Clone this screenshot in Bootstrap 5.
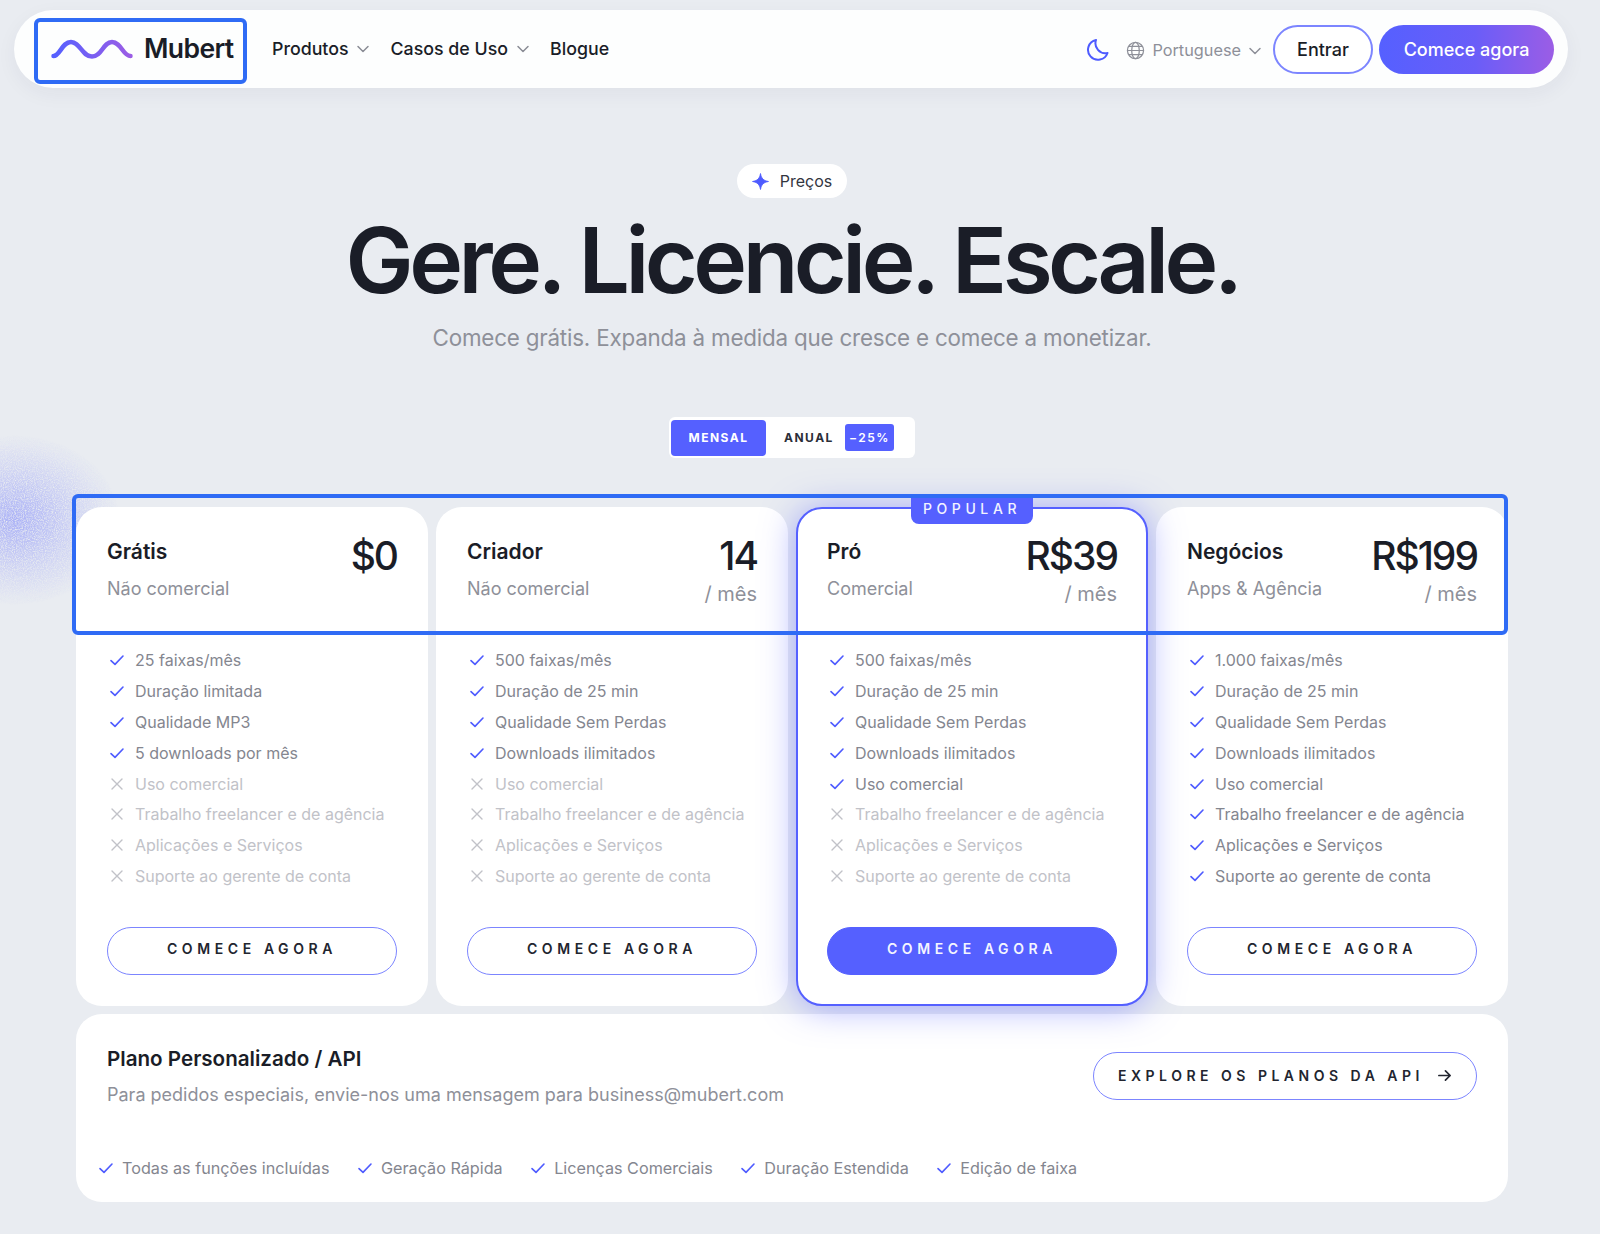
<!DOCTYPE html>
<html lang="pt">

<head>
  <meta charset="UTF-8" />
  <meta name="viewport" content="width=device-width, initial-scale=1.0" />
  <title>Preços - Mubert</title>
  <link href="https://cdn.jsdelivr.net/npm/bootstrap@5.3.0/dist/css/bootstrap.min.css" rel="stylesheet" />
  <style>
    body {
      background: #e9ecf1;
      font-family: "Inter", "Liberation Sans", sans-serif;
      color: #1a1d27;
      overflow-x: hidden;
    }

    .page-shell {
      width: 1584px;
      position: relative;
      height: 1234px;
      overflow: hidden;
    }

    .blur-spot {
      position: absolute;
      left: -90px;
      top: 435px;
      width: 210px;
      height: 170px;
    }

    .top-bar {
      margin: 10px 16px 0 14px;
      height: 78px;
      background: #fdfefe;
      border-radius: 39px;
      padding: 0 14px 0 20px;
      box-shadow: 0 6px 20px rgba(30, 40, 70, .05);
    }

    .logo-wrap {
      width: 213px;
      height: 66px;
      padding-left: 17px;
      gap: 11px;
      margin-right: 25px;
      font-size: 26.5px;
      font-weight: 600;
      letter-spacing: -.6px;
      color: #1a1d27;
      text-decoration: none;
    }

    .mark-box {
      position: absolute;
      border: 4px solid #2f6bf5;
      border-radius: 6px;
      pointer-events: none;
      z-index: 5;
    }

    .mark-logo {
      left: 0;
      top: 2px;
      width: 213px;
      height: 66px;
    }

    .mark-heads {
      left: 72px;
      top: 494px;
      width: 1436px;
      height: 141px;
    }

    .menu-link {
      font-size: 17.8px;
      font-weight: 500;
      color: #1a1d27;
      text-decoration: none;
      margin-right: 20.5px;
      gap: 7.5px;
    }

    .menu-link svg {
      color: #8a8c95;
    }

    .lang-pick {
      font-size: 16.3px;
      color: #8e9099;
      gap: 7px;
      margin: 0 11px 0 16px;
      padding-top: 3px;
    }

    .btn-enter {
      width: 100px;
      height: 49px;
      border: 2px solid #7c85ff;
      border-radius: 25px;
      background: #fff;
      color: #1a1d27;
      font-size: 18px;
      font-weight: 450;
      padding: 0;
    }

    .btn-start {
      width: 175px;
      height: 49px;
      margin-left: 6px;
      border: 0;
      border-radius: 25px;
      background: linear-gradient(90deg, #5560ff 0%, #6a5df8 55%, #9b5de5 100%);
      color: #fff;
      font-size: 18px;
      font-weight: 450;
      padding: 0;
    }

    .tag-pill {
      width: 110px;
      height: 34px;
      margin-top: 76px;
      gap: 11px;
      background: #fff;
      border-radius: 17px;
      font-size: 16px;
      color: #33363f;
    }

    .hero-title {
      font-size: 91px;
      font-weight: 600;
      letter-spacing: -4.5px;
      line-height: 110px;
      margin: 7px 0 0;
      color: #1a1d27;
    }

    .hero-sub {
      font-size: 22.4px;
      color: #8e9099;
      line-height: 32px;
      margin: 7px 0 0;
      letter-spacing: -.2px;
    }

    .billing-switch {
      width: 246px;
      height: 41px;
      margin-top: 63px;
      padding: 2px;
      background: #fff;
      border-radius: 6px;
      font-size: 12px;
      font-weight: 700;
      letter-spacing: 1.5px;
    }

    .billing-on {
      width: 95px;
      height: 36px;
      background: #5560ff;
      color: #fff;
      border-radius: 4px;
    }

    .billing-off {
      margin-left: 18px;
      color: #2b2e38;
    }

    .billing-off-tag {
      width: 49px;
      height: 27px;
      margin-left: 11px;
      background: #5560ff;
      color: #fff;
      border-radius: 3px;
      font-weight: 600;
    }

    .plans-area {
      width: 1432px;
      margin: 49px 0 0 76px;
    }

    .plan-box {
      height: 499px;
      background: #fff;
      border: 0;
      border-radius: 26px;
      padding: 31px 31px 0;
    }

    .plan-hot {
      z-index: 2;
      border: 2px solid #5560ff;
      padding: 29px 29px 0;
      box-shadow: 0 2px 34px rgba(85, 96, 255, .5);
    }

    .hot-tag {
      position: absolute;
      top: -11px;
      left: 113px;
      width: 122px;
      height: 26px;
      background: #5560ff;
      color: #f2f3ff;
      border-radius: 0 0 8px 8px;
      font-size: 14px;
      line-height: 22px;
      font-weight: 500;
      letter-spacing: 4.6px;
      text-align: center;
    }

    .plan-head {
      height: 96px;
      margin-bottom: 10.5px;
    }

    .plan-name {
      font-size: 21px;
      font-weight: 600;
      line-height: 28px;
      margin: 0 0 10px;
    }

    .plan-note {
      font-size: 18px;
      line-height: 26px;
      color: #8e9099;
      margin: 0;
    }

    .plan-price {
      font-size: 39px;
      font-weight: 500;
      line-height: 44px;
      letter-spacing: -2px;
      white-space: nowrap;
      margin-top: -4px;
    }

    .plan-per {
      font-size: 20px;
      line-height: 28px;
      color: #8e9099;
      margin-top: 2px;
    }

    .perk-list {
      height: 282.5px;
      margin: 0;
    }

    .perk-row {
      height: 30.9px;
      gap: 10px;
      padding-left: 2px;
      font-size: 16px;
      color: #84868f;
    }

    .perk-row svg {
      color: #4e5bff;
      flex: none;
    }

    .perk-off,
    .perk-off svg {
      color: #c1c2c8;
    }

    .plan-btn {
      height: 48px;
      border: 1.5px solid #7c85ff;
      border-radius: 24px;
      background: #fff;
      color: #22252f;
      font-size: 14px;
      font-weight: 600;
      letter-spacing: 4.6px;
      padding: 0 0 5px;
    }

    .plan-btn:hover {
      background: #fff;
    }

    .plan-btn-fill {
      background: #5560ff;
      border-color: #5560ff;
      color: #f4f5ff;
    }

    .custom-box {
      height: 188px;
      margin-top: 8px;
      background: #fff;
      border: 0;
      border-radius: 26px;
      padding: 30px 31px 0;
    }

    .custom-title {
      font-size: 20.6px;
      font-weight: 600;
      line-height: 30px;
      margin: 0 0 7px;
    }

    .custom-sub {
      font-size: 18px;
      line-height: 28px;
      color: #8e9099;
      margin: 0;
    }

    .api-btn {
      width: 384px;
      height: 48px;
      margin-top: 8px;
      gap: 13px;
      border: 1.5px solid #7c85ff;
      border-radius: 24px;
      background: #fff;
      color: #22252f;
      font-size: 14px;
      font-weight: 600;
      letter-spacing: 4.5px;
      padding: 0 0 2px;
    }

    .custom-perks {
      margin: 47px 0 0 -9px;
      gap: 27.5px;
      font-size: 16.2px;
      color: #84868f;
    }

    .custom-perks svg {
      color: #4e5bff;
    }
  </style>
</head>

<body>
  <div class="page-shell">
    <!-- grainy glow behind the first card -->
    <svg class="blur-spot" viewBox="0 0 210 170">
      <defs>
        <radialGradient id="spotFill">
          <stop offset="0" stop-color="#5560ff" stop-opacity=".42" />
          <stop offset=".5" stop-color="#5560ff" stop-opacity=".2" />
          <stop offset="1" stop-color="#5560ff" stop-opacity="0" />
        </radialGradient>
        <filter id="spotGrain" x="0" y="0" width="100%" height="100%">
          <feTurbulence type="fractalNoise" baseFrequency=".9" numOctaves="2" seed="4" result="grain" />
          <feColorMatrix in="grain" type="matrix" values="0 0 0 0 1  0 0 0 0 1  0 0 0 0 1  0 0 0 2.200 -.35" result="mask" />
          <feComposite in="SourceGraphic" in2="mask" operator="in" />
        </filter>
      </defs>
      <ellipse cx="105" cy="85" rx="105" ry="85" fill="url(#spotFill)" filter="url(#spotGrain)" />
    </svg>

    <svg class="d-none">
      <symbol id="ico-check" viewBox="0 0 16 16">
        <path d="M2 8.6 6 12.4 14 4" fill="none" stroke="currentColor" stroke-width="1.6" stroke-linecap="round" stroke-linejoin="round" />
      </symbol>
      <symbol id="ico-cross" viewBox="0 0 16 16">
        <path d="M3 3 13 13M13 3 3 13" fill="none" stroke="currentColor" stroke-width="1.4" stroke-linecap="round" />
      </symbol>
      <symbol id="ico-chev" viewBox="0 0 14 14">
        <path d="M2 4.5 7 9.5 12 4.5" fill="none" stroke="currentColor" stroke-width="1.5" stroke-linecap="round" stroke-linejoin="round" />
      </symbol>
    </svg>

    <header class="top-bar d-flex align-items-center">
      <div class="position-relative">
        <a class="logo-wrap d-flex align-items-center" href="#">
          <svg width="82" height="22" viewBox="0 0 82 22">
            <defs>
              <linearGradient id="waveFill" x1="0" x2="1" y1="0" y2="0">
                <stop offset="0" stop-color="#5560ff" />
                <stop offset="1" stop-color="#9b5de5" />
              </linearGradient>
            </defs>
            <path d="M2.500 18C9 18 11 4 20 4S31 18.500 41 18.500 52 4 61 4 72 18 79.500 18" fill="none" stroke="url(#waveFill)" stroke-width="4.500" stroke-linecap="round" />
          </svg>
          <span>Mubert</span>
        </a>
        <div class="mark-box mark-logo"></div>
      </div>
      <a class="menu-link d-flex align-items-center" href="#">Produtos
        <svg width="14" height="14"><use href="#ico-chev" /></svg></a>
      <a class="menu-link d-flex align-items-center" href="#">Casos de Uso
        <svg width="14" height="14"><use href="#ico-chev" /></svg></a>
      <a class="menu-link d-flex align-items-center" href="#">Blogue</a>

      <div class="ms-auto d-flex align-items-center">
        <svg width="24" height="24" viewBox="0 0 24 24">
          <path d="M10 3A10 10 0 1 0 21.500 16 10 10 0 0 1 10 3Z" fill="none" stroke="#4e5bff" stroke-width="2" stroke-linejoin="round" />
        </svg>
        <div class="lang-pick d-flex align-items-center">
          <svg width="19" height="19" viewBox="0 0 20 20" fill="none" stroke="#8e9099" stroke-width="1.3">
            <circle cx="10" cy="10" r="8.500" />
            <ellipse cx="10" cy="10" rx="4" ry="8.500" />
            <path d="M1.500 10h17M2.800 5.600h14.400M2.800 14.400h14.400" />
          </svg>
          <span>Portuguese</span>
          <svg width="14" height="14"><use href="#ico-chev" /></svg>
        </div>
        <button class="btn btn-enter" type="button">Entrar</button>
        <button class="btn btn-start" type="button">Comece agora</button>
      </div>
    </header>

    <section class="d-flex flex-column align-items-center">
      <div class="tag-pill d-flex align-items-center justify-content-center">
        <svg width="17" height="17" viewBox="0 0 16 16">
          <path d="M8 .5C8.800 5.200 10.800 7.200 15.500 8 10.800 8.800 8.800 10.800 8 15.500 7.200 10.800 5.200 8.800 .5 8 5.200 7.200 7.200 5.200 8 .5Z" fill="#4e5bff" stroke="#4e5bff" stroke-width=".8" stroke-linejoin="round" />
        </svg>
        <span>Preços</span>
      </div>
      <h1 class="hero-title">Gere. Licencie. Escale.</h1>
      <p class="hero-sub">Comece grátis. Expanda à medida que cresce e comece a monetizar.</p>
      <div class="billing-switch d-flex align-items-center">
        <div class="billing-on d-flex align-items-center justify-content-center">MENSAL</div>
        <div class="billing-off">ANUAL</div>
        <div class="billing-off-tag d-flex align-items-center justify-content-center">−25%</div>
      </div>
    </section>

    <div class="mark-box mark-heads"></div>

    <main class="plans-area">
      <div class="row g-2" id="planRow"></div>

      <div class="card custom-box">
        <div class="d-flex justify-content-between align-items-start">
          <div>
            <h2 class="custom-title">Plano Personalizado / API</h2>
            <p class="custom-sub">Para pedidos especiais, envie-nos uma mensagem para business@mubert.com</p>
          </div>
          <button class="btn api-btn d-flex align-items-center justify-content-center" type="button">EXPLORE OS PLANOS DA API
            <svg width="15" height="15" viewBox="0 0 16 16">
              <path d="M2 8h12M9 3l5 5-5 5" fill="none" stroke="#22252f" stroke-width="1.800" stroke-linecap="round" stroke-linejoin="round" />
            </svg>
          </button>
        </div>
        <div class="custom-perks d-flex">
          <span class="d-flex align-items-center gap-2"><svg width="16" height="16"><use href="#ico-check" /></svg>Todas as funções incluídas</span>
          <span class="d-flex align-items-center gap-2"><svg width="16" height="16"><use href="#ico-check" /></svg>Geração Rápida</span>
          <span class="d-flex align-items-center gap-2"><svg width="16" height="16"><use href="#ico-check" /></svg>Licenças Comerciais</span>
          <span class="d-flex align-items-center gap-2"><svg width="16" height="16"><use href="#ico-check" /></svg>Duração Estendida</span>
          <span class="d-flex align-items-center gap-2"><svg width="16" height="16"><use href="#ico-check" /></svg>Edição de faixa</span>
        </div>
      </div>
    </main>
  </div>

  <script src="https://cdn.jsdelivr.net/npm/bootstrap@5.3.0/dist/js/bootstrap.bundle.min.js"></script>
  <script>
    // plan cards come from this list, "on" = how many perks are ticked
    const plans = [
      { name: "Grátis", note: "Não comercial", price: "$0", per: "", on: 4,
        perks: ["25 faixas/mês", "Duração limitada", "Qualidade MP3", "5 downloads por mês"] },
      { name: "Criador", note: "Não comercial", price: "14", per: "/ mês", on: 4,
        perks: ["500 faixas/mês", "Duração de 25 min", "Qualidade Sem Perdas", "Downloads ilimitados"] },
      { name: "Pró", note: "Comercial", price: "R$39", per: "/ mês", on: 5, hot: true,
        perks: ["500 faixas/mês", "Duração de 25 min", "Qualidade Sem Perdas", "Downloads ilimitados"] },
      { name: "Negócios", note: "Apps & Agência", price: "R$199", per: "/ mês", on: 8,
        perks: ["1.000 faixas/mês", "Duração de 25 min", "Qualidade Sem Perdas", "Downloads ilimitados"] },
    ];
    const extraPerks = ["Uso comercial", "Trabalho freelancer e de agência", "Aplicações e Serviços", "Suporte ao gerente de conta"];

    document.getElementById("planRow").innerHTML = plans.map((p) => {
      const rows = p.perks.concat(extraPerks).map((txt, i) => {
        const ok = i < p.on;
        return `<li class="perk-row d-flex align-items-center ${ok ? "" : "perk-off"}">
          <svg width="16" height="16"><use href="#${ok ? "ico-check" : "ico-cross"}" /></svg>${txt}</li>`;
      }).join("");
      return `<div class="col-3">
        <div class="card plan-box position-relative ${p.hot ? "plan-hot" : ""}">
          ${p.hot ? '<div class="hot-tag">POPULAR</div>' : ""}
          <div class="plan-head d-flex justify-content-between">
            <div>
              <h3 class="plan-name">${p.name}</h3>
              <p class="plan-note">${p.note}</p>
            </div>
            <div class="text-end">
              <div class="plan-price">${p.price}</div>
              <div class="plan-per">${p.per}</div>
            </div>
          </div>
          <ul class="perk-list list-unstyled">${rows}</ul>
          <button class="btn plan-btn ${p.hot ? "plan-btn-fill" : ""}" type="button">COMECE AGORA</button>
        </div>
      </div>`;
    }).join("");
  </script>
</body>

</html>
